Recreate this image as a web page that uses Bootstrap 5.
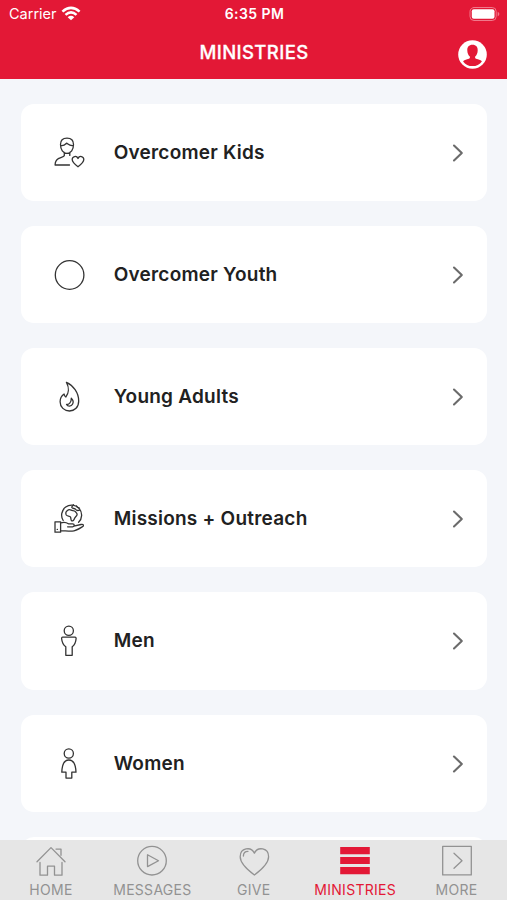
<!DOCTYPE html>
<html lang="en">
<head>
<meta charset="utf-8">
<meta name="viewport" content="width=device-width, initial-scale=1">
<title>Ministries</title>
<link href="https://cdn.jsdelivr.net/npm/bootstrap@5.3.0/dist/css/bootstrap.min.css" rel="stylesheet">
<style>
body{font-family:Inter,"Liberation Sans",sans-serif;background:#f4f6fa;color:#212121}
svg{display:block;fill:none;stroke-linecap:round;stroke-linejoin:round}
.app{height:900px}
.app-header{height:79px;background:#e31836;color:#fff;flex:none}
.status{height:28px;font-size:14px;line-height:28px;padding:0 7px 0 9px}
.carrier{font-size:14.5px;letter-spacing:0}
.clock{font-size:14px;font-weight:600;letter-spacing:.42px}
.title-row{height:51px;padding:0 20px 0 21px}
.page-title{font-size:18.5px;font-weight:500;line-height:24px;margin:-4px 0 0;letter-spacing:.4px;-webkit-text-stroke:.3px}
.profile{margin-top:1px}
.feed{padding:24.6px 19.9px 0 20.5px;gap:25px}
.ministry{height:97.2px;flex:none;border-radius:13px;padding:1px 23px 0 33px;text-decoration:none;color:#212121}
.ministry svg{stroke:#333;stroke-width:1.3}
.ministry .go{stroke:#6b6b6b;stroke-width:2.1}
.label{font-size:19px;font-weight:600;line-height:24px;margin-left:28.2px;letter-spacing:.23px}
.tabs{height:60px;background:#e6e6e6;flex:none;z-index:1}
.tab{width:20%;color:#929292;font-size:14px;line-height:18px;letter-spacing:.28px;text-decoration:none;padding:5px 0 0 .6px}
.tab svg{stroke:#929292;stroke-width:1.3;margin-bottom:4px}
.tab.current{color:#e31836}
.tab.current svg{stroke:none;fill:#e31836}
</style>
<script src="https://cdn.jsdelivr.net/npm/bootstrap@5.3.0/dist/js/bootstrap.bundle.min.js"></script>
</head>
<body>
<div class="app d-flex flex-column overflow-hidden">
  <header class="app-header">
    <div class="status row g-0 align-items-center">
      <div class="col d-flex align-items-center"><span class="carrier">Carrier</span>
        <svg class="ms-1" width="20" height="16" viewBox="0 0 20 16" stroke="#fff" stroke-width="2.6" style="stroke-linecap:butt"><path d="M1.4 5.6Q10 -2 18.6 5.6M4.5 8.9Q10 4 15.5 8.9"/><path d="M10 14.3 6.7 11.2Q10 8.4 13.3 11.2Z" fill="#fff" stroke="none"/></svg>
      </div>
      <div class="col-auto clock">6:35 PM</div>
      <div class="col d-flex justify-content-end">
        <svg width="31" height="15" viewBox="0 0 31 15"><rect x="1" y=".5" width="26.2" height="13" rx="4" stroke="#f0798b"/><rect x="2.8" y="2.3" width="22.7" height="9.4" rx="2" fill="#fff"/><path d="M28.7 4.8v4.6q1.7-.8 1.7-2.3T28.7 4.8Z" fill="#f0798b"/></svg>
      </div>
    </div>
    <div class="title-row row g-0 align-items-center">
      <div class="col"></div>
      <h1 class="page-title col-auto">MINISTRIES</h1>
      <div class="col d-flex justify-content-end">
        <svg class="profile" width="29" height="29" viewBox="0 0 29 29"><circle cx="14.5" cy="14.5" r="14.3" fill="#fff"/><path d="M14.5 4.8c-3.6 0-5.4 2.3-5.2 5.6.1 2.7 1 4.6 2.5 6.1.5 1.4-.3 2.1-1.8 2.6-2.3.7-3.9 1.2-4.9 2.3 2.2 3 5.5 4.7 9.4 4.7s7.2-1.7 9.4-4.7c-1-1.1-2.6-1.6-4.9-2.3-1.5-.5-2.3-1.2-1.8-2.6 1.5-1.5 2.4-3.4 2.5-6.1.2-3.3-1.6-5.6-5.2-5.6Z" fill="#e31836"/></svg>
      </div>
    </div>
  </header>

  <main class="feed d-flex flex-column flex-grow-1 overflow-hidden">
    <a href="#" class="ministry bg-white d-flex align-items-center">
      <svg width="32" height="32" viewBox="0 0 32 32"><path d="M6.5 7.5C6.5 3.5 9.2 1.2 13 1.2s6.5 2.3 6.5 6.3c0 5-2.6 8.8-6.5 8.8S6.5 12.5 6.5 7.5ZM6.7 8.8C9.5 8.6 11 8 12.6 6.2c1.2.4 1.4 2.4 6.7 2.6M10.3 15.5v3.1c-.8 1.5-3.5 1.5-6 3C1.8 23 1.2 24.5 1.1 28h14.4M15.8 15.5v2.9"/><path d="M24 29.8c-3.3-2.5-5.8-4.5-5.8-7.2 0-3.5 4.5-4.3 5.8-1.1 1.3-3.2 5.8-2.4 5.8 1.1 0 2.7-2.5 4.7-5.8 7.2Z"/></svg>
      <span class="label flex-grow-1">Overcomer Kids</span>
      <svg class="go" width="12" height="18" viewBox="0 0 12 18"><path d="m2 1.5 7.8 7.5L2 16.5"/></svg>
    </a>
    <a href="#" class="ministry bg-white d-flex align-items-center">
      <svg width="32" height="32" viewBox="0 0 32 32"><circle cx="15.6" cy="16" r="14.3"/></svg>
      <span class="label flex-grow-1">Overcomer Youth</span>
      <svg class="go" width="12" height="18" viewBox="0 0 12 18"><path d="m2 1.5 7.8 7.5L2 16.5"/></svg>
    </a>
    <a href="#" class="ministry bg-white d-flex align-items-center">
      <svg width="32" height="32" viewBox="0 0 32 32"><path d="M12.4 1.3c6.8 3 12.3 10.5 12.3 18.6 0 6.3-4 10.1-9.2 10.1s-9.4-3.9-9.4-9.3c0-3.2 1.2-5.8 4-7.7.1 1.5.7 2.5 1.7 3 2.9-3.3 3.6-9 .6-14.7Z"/><path d="M17.3 17.2c2 1.9 2.2 4.3 1.2 6.1-1.2 2.2-4.6 2.5-6 .2 2.1.1 5-1.7 4.8-6.3Z"/></svg>
      <span class="label flex-grow-1">Young Adults</span>
      <svg class="go" width="12" height="18" viewBox="0 0 12 18"><path d="m2 1.5 7.8 7.5L2 16.5"/></svg>
    </a>
    <a href="#" class="ministry bg-white d-flex align-items-center">
      <svg width="32" height="32" viewBox="0 0 32 32"><path d="M9.2 17.5A10 10 0 1 1 24.6 19.3"/><path d="M12.2 8.8c1-2 3.1-2.8 5-1.7 1.2.7 3.1.2 4.2 1.6.7 1.1 1.8 1.4 1.7 2.8-.1 1.6-2 2.2-2.6 4-.5 1.5-1.7 2.8-2.8 2.3-1.2-.6-.4-2.6-1.3-4-.9-1.1-3.3-.4-4.1-1.8-.5-1-.6-2.2-.1-3.2ZM19.5 1.8c-.8 1.5-2.2 1.7-1.5 2.9.9 1.3 2.9.3 3.8 1.8.8 1.3 1.8 1.3 3.8.7M22.5 3c.3 1.1 1.3 1.7 2.7 1.8"/><path d="M1 18.8h5.6v10.4H1ZM6.6 20c3-1.2 5.5-.9 7.8.8h4.2c2.2.1 2.2 2.9 0 3h-5M19.8 23.2l7.2-1.7c2.5-.5 3.5 1.1 1.2 2.4-4.7 2.9-7 4.2-10 4.3-4.3.1-7.6-.4-11.6-.5M3.2 26.4h.2"/></svg>
      <span class="label flex-grow-1">Missions + Outreach</span>
      <svg class="go" width="12" height="18" viewBox="0 0 12 18"><path d="m2 1.5 7.8 7.5L2 16.5"/></svg>
    </a>
    <a href="#" class="ministry bg-white d-flex align-items-center">
      <svg width="32" height="32" viewBox="0 0 32 32"><circle cx="14.8" cy="5.7" r="4.6"/><path d="M8.6 12.2h12.4c.8 0 1.2.5 1.1 1.3-.3 4-1.3 6.5-3.9 8.3v8.5h-6.4v-8.5c-2.6-1.8-3.8-4.3-4.2-8.3 0-.8.3-1.3 1-1.3Z"/></svg>
      <span class="label flex-grow-1">Men</span>
      <svg class="go" width="12" height="18" viewBox="0 0 12 18"><path d="m2 1.5 7.8 7.5L2 16.5"/></svg>
    </a>
    <a href="#" class="ministry bg-white d-flex align-items-center">
      <svg width="32" height="32" viewBox="0 0 32 32"><circle cx="14.8" cy="5.5" r="4.6"/><path d="M14.8 12c-4.6 0-6.7 4.6-7 12.2h4.2v5.9h5.8v-5.9h4.2c-.3-7.6-2.6-12.2-7.2-12.2Z"/></svg>
      <span class="label flex-grow-1">Women</span>
      <svg class="go" width="12" height="18" viewBox="0 0 12 18"><path d="m2 1.5 7.8 7.5L2 16.5"/></svg>
    </a>
    <div class="ministry bg-white"></div>
  </main>

  <nav class="tabs d-flex">
    <a href="#" class="tab d-flex flex-column align-items-center"><svg width="32" height="32" viewBox="0 0 32 32"><path d="M2 16.8 16 2.6l14 14.2M5 17.5v12.7h7.5v-9h7v9H27V17.5M21 4.1h5v6.2"/></svg><span>HOME</span></a>
    <a href="#" class="tab d-flex flex-column align-items-center"><svg width="32" height="32" viewBox="0 0 32 32"><circle cx="16" cy="15.7" r="14.3"/><path d="M11.5 9.8v11.8l11-5.9Z"/></svg><span>MESSAGES</span></a>
    <a href="#" class="tab d-flex flex-column align-items-center"><svg width="32" height="32" viewBox="0 0 32 32"><path d="M16.4 30C8.4 24 2.2 17.5 2.2 11.7 2.2 3 12.9 1 16.4 8.1 19.9 1 30.6 3 30.6 11.7 30.6 17.5 24.4 24 16.4 30ZM5.4 11c0-3 1.7-4.7 4.6-4.7"/></svg><span>GIVE</span></a>
    <a href="#" class="tab current d-flex flex-column align-items-center"><svg width="32" height="32" viewBox="0 0 32 32"><path d="M1.2 2h29.6v7.3H1.2ZM1.2 12.1h29.6v7H1.2ZM1.2 22h29.6v7.2H1.2Z"/></svg><span>MINISTRIES</span></a>
    <a href="#" class="tab d-flex flex-column align-items-center"><svg width="32" height="32" viewBox="0 0 32 32"><path d="M1.7 1.3h28.6v28.6H1.7Z"/><path d="m13 8.3 8 7.4-8 7.5"/></svg><span>MORE</span></a>
  </nav>
</div>
</body>
</html>
